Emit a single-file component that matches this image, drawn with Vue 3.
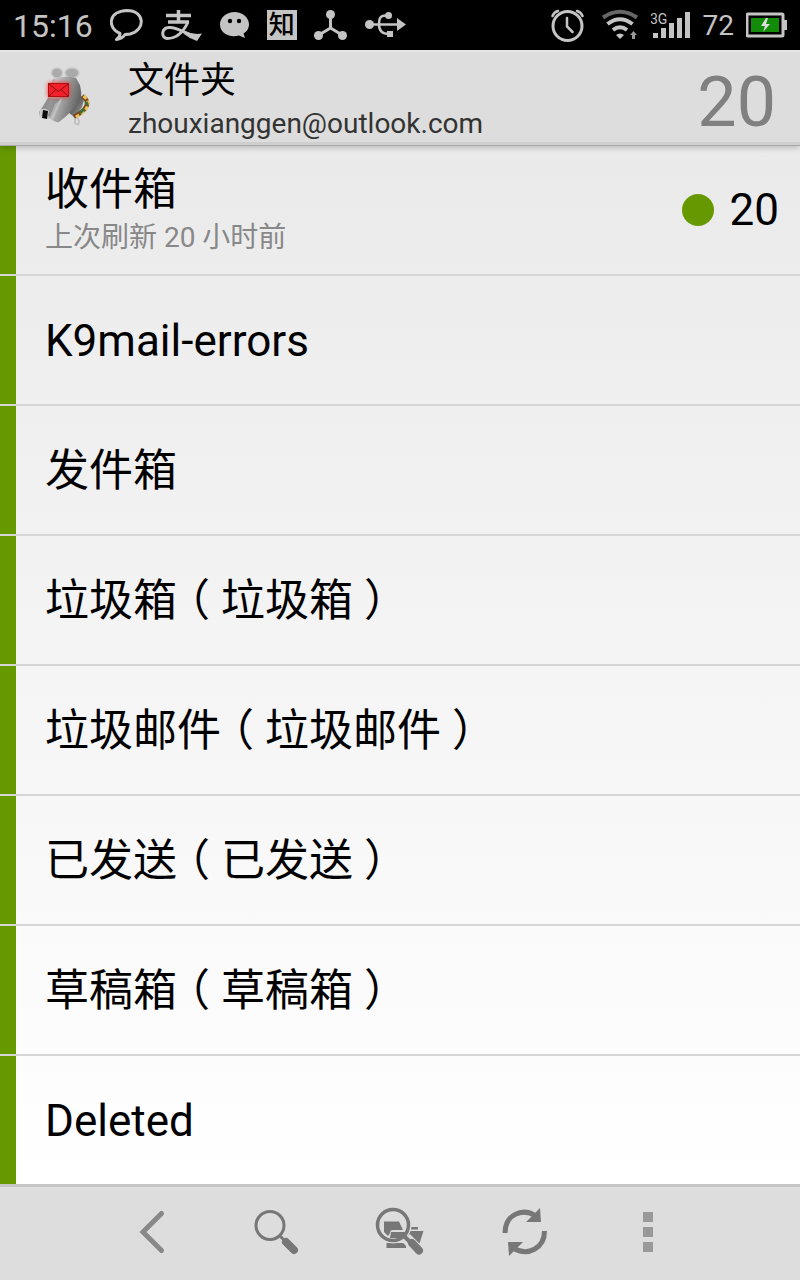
<script setup>
const folders = [
  { name: '收件箱', status: '上次刷新 20 小时前', unread: 20 },
  { name: 'K9mail-errors' },
  { name: '发件箱' },
  { name: '垃圾箱', alias: '垃圾箱' },
  { name: '垃圾邮件', alias: '垃圾邮件' },
  { name: '已发送', alias: '已发送' },
  { name: '草稿箱', alias: '草稿箱' },
  { name: 'Deleted' },
]
</script>

<template>
  <div class="screen">
    <div class="status-bar">
      <div class="status-group notices">
        <time class="clock">15:16</time>
        <svg width="34" height="34" viewBox="109 8 34 34" fill="none" stroke="#c4c4c4" stroke-width="3" stroke-linejoin="round" aria-hidden="true">
          <path d="M119 33.500C106 28 107 11 126 10.500C144 10.500 145 30 129 34Q125 34.500 124 34.500Q121 39 115.500 39.500Q119 37 119 33.500Z" />
        </svg>
        <svg width="42" height="34" viewBox="160 8 42 34" fill="none" stroke="#c4c4c4" stroke-width="3.500" aria-hidden="true">
          <path d="M165 15.500H190M167 22H188M177.500 10V22" />
          <path d="M187 22C182 33 174 38.500 166 38.500C160 38 160 28 168 27.500C176 27 184 33 192 36" stroke-width="3" />
          <path d="M184 31Q192 35 201 33.500L196 41Q189 39 183 34Z" fill="#c4c4c4" stroke="none" />
        </svg>
        <svg width="30" height="34" viewBox="219 8 30 34" aria-hidden="true">
          <path d="M233.500 12C241 12 248 17 248 24.500Q248 30 242.500 33.500L244 38L238 35.500C228 38 219 33 219 24.500C219 17 226 12 233.500 12Z" fill="#c4c4c4" />
          <circle cx="229" cy="21" r="2.200" /><circle cx="238" cy="21" r="2.200" />
        </svg>
        <span class="zhi">知</span>
        <svg width="34" height="34" viewBox="314 8 34 34" fill="#c4c4c4" aria-hidden="true">
          <path d="M330.500 14V29M330.500 28L318 35.500M330.500 28L343 35.500" stroke="#c4c4c4" stroke-width="3" />
          <circle cx="330.500" cy="14.500" r="4.500" /><circle cx="318.500" cy="35.500" r="4.500" /><circle cx="342.500" cy="35.500" r="4.500" />
        </svg>
        <svg width="42" height="34" viewBox="365 8 42 34" fill="#c4c4c4" aria-hidden="true">
          <path d="M370 24.500H398M388 15.500H386C379 15.500 379 20 379 24.500C379 30 381 34 389 34" fill="none" stroke="#c4c4c4" stroke-width="2.500" />
          <circle cx="369.500" cy="24.500" r="4.500" /><circle cx="388.500" cy="15.500" r="3.500" />
          <path d="M397 18L406 24.500L397 31ZM387 31H393V37H387Z" />
        </svg>
      </div>
      <div class="status-group meters">
        <svg width="34" height="34" viewBox="552 8 34 34" fill="none" stroke="#c4c4c4" stroke-width="2.500" stroke-linecap="round" aria-hidden="true">
          <circle cx="568.500" cy="26" r="14.500" stroke-width="3" />
          <path d="M568 18V26.500L573.500 32M553.500 16Q555 12 559 11M583.500 16Q582 12 578 11" />
        </svg>
        <svg width="38" height="34" viewBox="602 8 38 34" fill="none" stroke="#c4c4c4" stroke-width="4" aria-hidden="true">
          <path d="M604 17.500Q621 6 638 17.500" stroke="#666" />
          <path d="M608.500 24Q621 14.500 633.500 24M614 30Q621 24.500 628 30" />
          <path d="M617 35Q621 32 625 35L621 39Z" fill="#c4c4c4" stroke="none" />
          <path d="M634.500 31L638 35H636V39H633V35H631Z" fill="#999" stroke="none" />
        </svg>
        <svg width="40" height="34" viewBox="649 8 40 34" fill="#c4c4c4" aria-label="3G">
          <text x="648" y="24" class="network">3G</text>
          <path d="M651 33H656V38H651ZM659 28H664V38H659ZM667 23H672V38H667ZM675 18H680V38H675ZM683 12H688V38H683Z" />
        </svg>
        <span class="percent">72</span>
        <svg width="42" height="34" viewBox="746 8 42 34" aria-hidden="true">
          <rect x="747" y="14" width="36" height="22" rx="1" fill="#000" stroke="#c4c4c4" stroke-width="3" />
          <path d="M784 20H787V30H784Z" fill="#c4c4c4" />
          <rect x="751" y="18" width="28" height="14" fill="#128c08" />
          <path d="M766 18L761 26H765L763 32L770 24H766L768 18Z" fill="#ddd" />
        </svg>
      </div>
    </div>

    <header class="app-bar">
      <svg width="56" height="72" viewBox="36 66 56 72" aria-hidden="true">
        <defs>
          <linearGradient id="head" x1="0" y1="0" x2="1" y2="0.300">
            <stop offset="0" stop-color="#777" /><stop offset="0.400" stop-color="#c4c4c4" />
            <stop offset="0.700" stop-color="#999" /><stop offset="1" stop-color="#666" />
          </linearGradient>
          <linearGradient id="neck" x1="0" y1="0" x2="1" y2="1">
            <stop offset="0" stop-color="#222" /><stop offset="1" stop-color="#aaa" />
          </linearGradient>
          <filter id="glow" x="-30%" y="-30%" width="160%" height="160%"><feGaussianBlur stdDeviation="2" /></filter>
        </defs>
        <ellipse cx="57" cy="73" rx="5.500" ry="5" fill="#aaa" stroke="#c8c8c8" stroke-width="1.500" />
        <ellipse cx="72" cy="73" rx="7" ry="5" fill="#aaa" stroke="#c8c8c8" stroke-width="1.500" />
        <path d="M77 98L84 95Q85 108 74 117L68 112Z" fill="url(#neck)" />
        <path d="M82.500 96Q95 105 74 117" fill="none" stroke="#7b4318" stroke-width="4.500" />
        <path d="M83.500 96Q96 106 74 118" fill="none" stroke="#e9c355" stroke-width="3" stroke-dasharray="4 2" />
        <path d="M86 102L87.500 105M84 109L80 113" stroke="#39733a" stroke-width="3" />
        <path d="M75 118V123Q79 127 79 121L77 117" fill="none" stroke="#bbb" stroke-width="1.500" />
        <path d="M53 79Q64 75 76 78L80 85Q82 93 81 100Q72 112 59 122Q55 123 51 119L40 117L39 112L48 98Z" fill="url(#head)" />
        <path d="M48 98L61 99L55 104L50 117L40 112Z" fill="#777" opacity="0.600" />
        <path d="M61 99L52 119" stroke="#d0d0d0" stroke-width="2" opacity="0.600" />
        <path d="M40 110Q45 107 49 111L47 119L40 117Z" fill="#ccc" />
        <path d="M43 110L48 111L47 119L42 118Z" fill="#0b0b0b" />
        <rect x="48" y="83" width="21" height="14" fill="#f22" filter="url(#glow)" />
        <rect x="48.500" y="83.500" width="20" height="13" fill="#f2202a" stroke="#a11" />
        <path d="M49 84L58.500 91.500L68 84M49 96L56 89.500M68 96L61 89.500" fill="none" stroke="#811" />
      </svg>
      <div class="titles">
        <h1>文件夹</h1>
        <p>zhouxianggen@outlook.com</p>
      </div>
      <span class="total">20</span>
    </header>

    <main>
      <ul class="folders">
        <li v-for="folder in folders" :key="folder.name">
          <a href="#" class="folder" @click.prevent>
            <span class="label">
              <span class="name">{{ folder.name }}<template v-if="folder.alias"><span class="paren">（</span>{{ folder.alias }}<span class="paren">）</span></template></span>
              <span v-if="folder.status" class="status">{{ folder.status }}</span>
            </span>
            <span v-if="folder.unread" class="unread"><i class="dot"></i>{{ folder.unread }}</span>
          </a>
        </li>
      </ul>
    </main>

    <nav class="toolbar">
      <button type="button" aria-label="返回">
        <svg width="52" height="52" viewBox="126 1206 52 52" fill="none" stroke="#888" stroke-width="5" stroke-linecap="round" stroke-linejoin="miter">
          <path d="M161.500 1213.500L143 1232L161.500 1250.500" />
        </svg>
      </button>
      <button type="button" aria-label="搜索">
        <svg width="52" height="52" viewBox="250 1206 52 52" fill="none" stroke="#777">
          <circle cx="270" cy="1225.500" r="14" stroke-width="3" />
          <path d="M280 1236L285 1241" stroke-width="3" />
          <path d="M286 1242L294 1250" stroke-width="8" stroke-linecap="round" />
        </svg>
      </button>
      <button type="button" aria-label="搜索文件夹">
        <svg width="52" height="52" viewBox="374 1206 52 52">
          <path d="M386.500 1248V1243H406V1248ZM409 1231H423.500L419 1245H407ZM411 1227H418V1229.500H411Z" fill="#777" />
          <path d="M384 1221.500H399L403 1230H393Q390 1230 390 1233L388 1236L384 1232Z" fill="#777" />
          <path d="M391 1232H407L400 1238H390Z" fill="#777" />
          <circle cx="393" cy="1225" r="17.500" fill="none" stroke="#ddd" stroke-width="2" />
          <circle cx="393" cy="1225" r="15.500" fill="none" stroke="#777" stroke-width="3.500" />
          <path d="M406 1238L419 1251" stroke="#ddd" stroke-width="11" />
          <path d="M404 1236L412 1244" stroke="#777" stroke-width="4" />
          <path d="M412 1243L419 1250.500" stroke="#777" stroke-width="8" stroke-linecap="round" />
        </svg>
      </button>
      <button type="button" aria-label="刷新">
        <svg width="52" height="52" viewBox="498 1206 52 52" fill="none" stroke="#777" stroke-width="5">
          <path d="M505 1233C505 1215 522 1207 536 1216M544.500 1231C544.500 1248 528 1257 513 1248" />
          <path d="M540 1208L541 1222H526ZM508 1242H523L509 1256Z" fill="#777" stroke="none" />
        </svg>
      </button>
      <button type="button" aria-label="更多">
        <svg width="52" height="52" viewBox="622 1206 52 52" fill="#999">
          <path d="M643 1212H653V1222H643ZM643 1227H653V1237H643ZM643 1242H653V1252H643Z" />
        </svg>
      </button>
    </nav>
  </div>
</template>

<style>
body {
  margin: 0;
}
</style>

<style scoped>
.screen {
  display: flex;
  flex-direction: column;
  min-height: 100vh;
  color: #000;
  background: #fff;
  font-family: Roboto, "Noto Sans CJK SC", sans-serif;
}

.status-bar {
  display: flex;
  align-items: center;
  justify-content: space-between;
  box-sizing: border-box;
  height: 50px;
  padding: 0 12px 0 13px;
  background: #000;
  color: #c4c4c4;
  font-size: 32px;
}

.status-group {
  display: flex;
  align-items: center;
}

.notices {
  gap: 17px;
}

.meters {
  gap: 12px;
}

.clock,
.percent {
  padding-top: 2px;
  line-height: 48px;
}

.percent {
  font-size: 28px;
}

.meters svg:first-child {
  margin-right: 4px;
}

.zhi {
  width: 30px;
  height: 30px;
  background: #c4c4c4;
  color: #000;
  font-size: 26px;
  font-weight: 500;
  line-height: 30px;
  text-align: center;
}

.network {
  font-size: 14px;
}

.app-bar {
  position: relative;
  display: flex;
  align-items: center;
  box-sizing: border-box;
  height: 96px;
  padding: 8px 24px 0 36px;
  border-bottom: 1px solid #a8a8a8;
  background: #ddd;
  box-shadow: inset 0 2px #e5e5e5, inset 0 -3px #cfcfcf, 0 2px 6px rgba(0, 0, 0, 0.2);
}

.titles {
  flex: 1;
  margin-left: 36px;
}

h1,
p {
  margin: 0;
  font-weight: 400;
}

h1 {
  font-size: 36px;
  line-height: 44px;
}

p {
  color: #333;
  font-size: 28px;
  line-height: 42px;
}

.total {
  color: #808080;
  font-size: 70px;
  line-height: 84px;
}

main {
  flex: 1;
  background: linear-gradient(#eaeaea, #fff);
}

.folders {
  margin: 0;
  padding: 0;
  list-style: none;
}

.folders li + li {
  border-top: 2px solid #d6d6d6;
}

.folder {
  display: flex;
  align-items: center;
  justify-content: space-between;
  box-sizing: border-box;
  height: 128px;
  padding: 0 21px 0 29px;
  border-left: 16px solid #690;
  color: #000;
  text-decoration: none;
}

.label {
  display: flex;
  flex-direction: column;
  gap: 2px;
  padding-top: 2px;
}

.name {
  font-size: 44px;
  line-height: 52px;
}

.paren {
  padding: 0 11px;
  font-feature-settings: "halt";
}

.status {
  color: #888;
  font-size: 28px;
  line-height: 40px;
}

.unread {
  display: flex;
  align-items: center;
  gap: 16px;
  font-size: 44px;
  line-height: 52px;
}

.dot {
  width: 32px;
  height: 32px;
  border-radius: 50%;
  background: #690;
}

.toolbar {
  display: flex;
  justify-content: center;
  box-sizing: border-box;
  height: 96px;
  padding-bottom: 4px;
  border-top: 3px solid #c6c6c6;
  background: #ddd;
}

.toolbar button {
  display: flex;
  align-items: center;
  justify-content: center;
  width: 124px;
  padding: 0;
  border: 0;
  background: none;
}
</style>
